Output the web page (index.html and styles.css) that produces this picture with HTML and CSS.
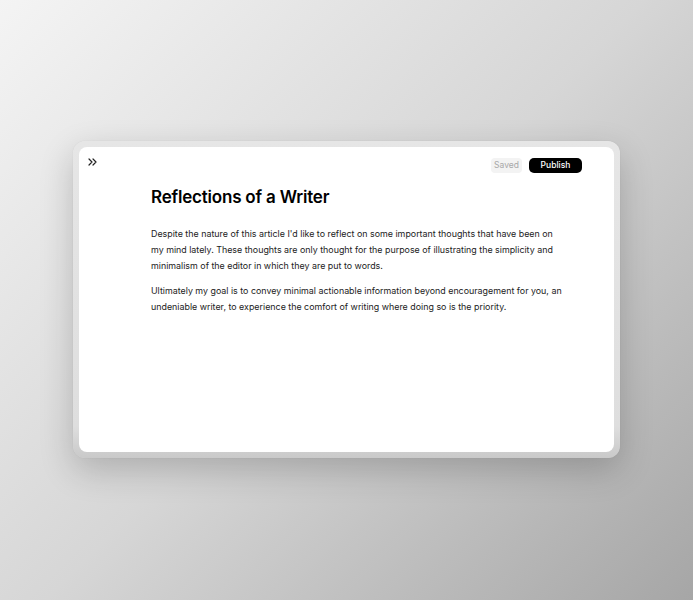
FILE: index.html
```html
<!DOCTYPE html>
<html>
<head>
<meta charset="utf-8">
<link rel="stylesheet" href="styles.css">
</head>
<body>
<div class="stage">
  <div class="frame">
    <div class="editor">
      <div class="topbar">
        <svg class="expand" width="10" height="8" viewBox="0 0 10 8"><path d="M1 1l3 3-3 3M5 1l3 3-3 3" fill="none" stroke="#222" stroke-width="1.2" stroke-linecap="round" stroke-linejoin="round"/></svg>
        <div class="actions">
          <span class="saved">Saved</span>
          <span class="publish">Publish</span>
        </div>
      </div>
      <div class="content">
        <h1 class="title">Reflections of a Writer</h1>
        <p class="para">Despite the nature of this article I'd like to reflect on some important thoughts that have been on my mind lately. These thoughts are only thought for the purpose of illustrating the simplicity and minimalism of the editor in which they are put to words.</p>
        <p class="para">Ultimately my goal is to convey minimal actionable information beyond encouragement for you, an undeniable writer, to experience the comfort of writing where doing so is the priority.</p>
      </div>
    </div>
  </div>
</div>
</body>
</html>
```
FILE: styles.css
```css
html, body {
  margin: 0;
  padding: 0;
}
body {
  width: 693px;
  height: 600px;
  overflow: hidden;
  font-family: Inter, "Liberation Sans", sans-serif;
  background: linear-gradient(135deg, #f4f4f4 0%, #d6d6d6 50%, #a6a6a6 100%);
}
.stage {
  padding: 141px 0 0 73px;
}
.frame {
  width: 535px;
  height: 305px;
  padding: 6px;
  border-radius: 12px;
  background: linear-gradient(180deg, #e6e6e6 0%, #dedede 90%, #c9c9c9 100%);
  box-shadow: 0 0 1px rgba(0,0,0,0.15), 0 12px 34px rgba(0,0,0,0.2);
}
.editor {
  width: 535px;
  height: 305px;
  background: #fff;
  border-radius: 8px;
  box-sizing: border-box;
}
.topbar {
  display: flex;
  justify-content: space-between;
  align-items: flex-start;
  padding: 10px 32px 0 9px;
  height: 27px;
  box-sizing: border-box;
}
.expand {
  margin-top: 1px;
}
.actions {
  display: flex;
  gap: 7px;
  margin-top: 1px;
}
.saved, .publish {
  font-size: 8.5px;
  height: 15px;
  line-height: 15px;
  border-radius: 4px;
  text-align: center;
}
.saved {
  width: 31px;
  background: #f3f3f3;
  color: #a8a8a8;
}
.publish {
  width: 53px;
  background: #000;
  color: #fff;
  font-weight: 500;
  border-radius: 5px;
}
.content {
  padding: 12px 50px 0 72px;
}
.title {
  margin: 0 0 18px 0;
  font-size: 17px;
  font-weight: 600;
  letter-spacing: -0.2px;
  line-height: 22px;
  color: #000;
}
.para {
  margin: 0 0 9px 0;
  font-size: 8.9px;
  line-height: 16px;
  color: #222;
}
```
